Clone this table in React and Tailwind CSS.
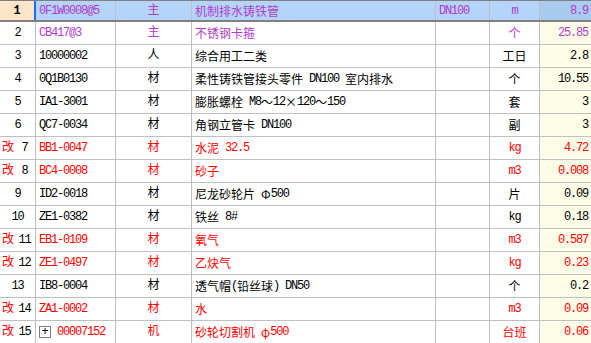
import React from "react";

const rows = [
  { no: 1, code: "0F1W0008@5", type: "主", name: "机制排水铸铁管", spec: "DN100", unit: "m", qty: "8.9", color: "purple" },
  { no: 2, code: "CB417@3", type: "主", name: "不锈钢卡箍", spec: "", unit: "个", qty: "25.85", color: "purple" },
  { no: 3, code: "10000002", type: "人", name: "综合用工二类", spec: "", unit: "工日", qty: "2.8" },
  { no: 4, code: "0Q1B0130", type: "材", name: "柔性铸铁管接头零件 DN100 室内排水", spec: "", unit: "个", qty: "10.55" },
  { no: 5, code: "IA1-3001", type: "材", name: "膨胀螺栓 M8～12×120～150", spec: "", unit: "套", qty: "3" },
  { no: 6, code: "QC7-0034", type: "材", name: "角钢立管卡 DN100", spec: "", unit: "副", qty: "3" },
  { no: 7, code: "BB1-0047", type: "材", name: "水泥 32.5", spec: "", unit: "kg", qty: "4.72", color: "red", changed: true },
  { no: 8, code: "BC4-0008", type: "材", name: "砂子", spec: "", unit: "m3", qty: "0.008", color: "red", changed: true },
  { no: 9, code: "ID2-0018", type: "材", name: "尼龙砂轮片 Φ500", spec: "", unit: "片", qty: "0.09" },
  { no: 10, code: "ZE1-0382", type: "材", name: "铁丝 8#", spec: "", unit: "kg", qty: "0.18" },
  { no: 11, code: "EB1-0109", type: "材", name: "氧气", spec: "", unit: "m3", qty: "0.587", color: "red", changed: true },
  { no: 12, code: "ZE1-0497", type: "材", name: "乙炔气", spec: "", unit: "kg", qty: "0.23", color: "red", changed: true },
  { no: 13, code: "IB8-0004", type: "材", name: "透气帽(铅丝球) DN50", spec: "", unit: "个", qty: "0.2" },
  { no: 14, code: "ZA1-0002", type: "材", name: "水", spec: "", unit: "m3", qty: "0.09", color: "red", changed: true },
  { no: 15, code: "00007152", type: "机", name: "砂轮切割机 φ500", spec: "", unit: "台班", qty: "0.06", color: "red", changed: true, group: true },
];

// ascii runs get squeezed to half-width, CJK stays full width
const Txt = ({ s }) =>
  s.split(/([\x00-\x7f]+)/).map((part, i) =>
    /^[\x00-\x7f]+$/.test(part) ? (
      <span key={i} className="tracking-[-1.2px] whitespace-pre">{part}</span>
    ) : (
      <span key={i} className="font-['Noto_Sans_CJK_SC',sans-serif]">{part}</span>
    )
  );

const colorOf = (c) =>
  c === "purple" ? "text-[#b03cc8]" : c === "red" ? "text-[#ff0000]" : "text-black";

const Row = ({ r }) => {
  const sel = r.no === 1;
  const tc = colorOf(r.color);
  const cell = "flex items-center border-r border-[#c0c0c0] h-full";
  return (
    <div
      className={
        sel
          ? "flex h-[22px] border-t border-b-2 border-[#808080] bg-[#b4d4fc]"
          : "flex h-[23px] border-b border-[#c0c0c0] bg-white"
      }
    >
      <div
        className={
          sel
            ? "flex items-center justify-center w-[36px] h-full bg-[#fde5c9] border-r-2 border-[#1e6ee8] font-bold"
            : "flex items-center w-[36px] " + cell
        }
      >
        {sel ? (
          <span>1</span>
        ) : r.changed ? (
          <>
            <span className="pl-[2px] text-[#ff0000]">改</span>
            <span className="flex-1 text-center tracking-[-1.2px]">{r.no}</span>
          </>
        ) : (
          <span className="flex-1 text-center tracking-[-1.2px]">{r.no}</span>
        )}
      </div>
      <div className={"w-[80px] pl-[3px] " + cell + " " + tc}>
        {r.group && (
          <span className="w-[12px] h-[12px] border border-[#808080] flex items-center justify-center text-black text-[12px] leading-none mr-[6px] shrink-0">
            +
          </span>
        )}
        <span className="tracking-[-1.2px]">{r.code}</span>
      </div>
      <div className={"w-[76px] justify-center " + cell + " " + tc}>{r.type}</div>
      <div className={"w-[244px] pl-[3px] whitespace-nowrap overflow-hidden " + cell + " " + tc}>
        <Txt s={r.name} />
      </div>
      <div className={"w-[54px] pl-[3px] " + cell + " " + tc}>
        <span className="tracking-[-1.2px]">{r.spec}</span>
      </div>
      <div className={"w-[50px] justify-center " + cell + " " + tc}>
        <Txt s={r.unit} />
      </div>
      <div
        className={
          "flex items-center justify-end w-[51px] h-full pr-[3px] " +
          (sel ? "bg-[#a9cbef] " : "bg-[#fefee8] ") +
          tc
        }
      >
        <span className="tracking-[-1.2px]">{r.qty}</span>
      </div>
    </div>
  );
};

export default function App() {
  return (
    <div
      className="w-[591px] h-[343px] overflow-hidden bg-white text-[12px] leading-none"
      style={{ fontFamily: '"Liberation Mono", "Noto Sans CJK SC", monospace' }}
    >
      {rows.map((r) => (
        <Row key={r.no} r={r} />
      ))}
    </div>
  );
}
